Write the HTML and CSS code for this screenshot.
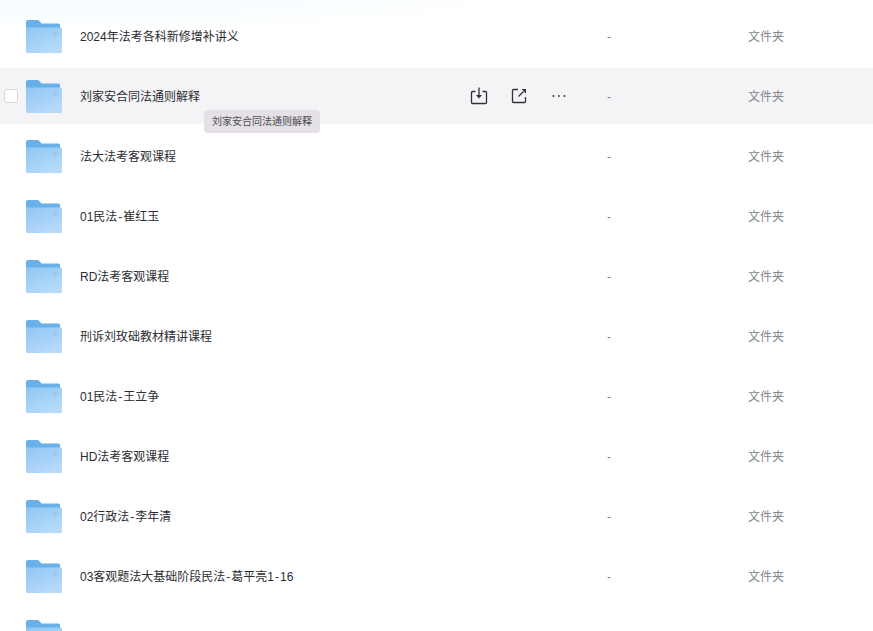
FILE: index.html
```html
<!DOCTYPE html>
<html lang="zh-CN">
<head>
<meta charset="utf-8">
<title>文件列表</title>
<link rel="stylesheet" href="styles.css">
</head>
<body>
<svg class="defs" width="0" height="0" aria-hidden="true">
  <defs>
    <linearGradient id="fg" x1="0" y1="0" x2="0.6" y2="1">
      <stop offset="0" stop-color="#90c6f3"/>
      <stop offset="1" stop-color="#b6dafa"/>
    </linearGradient>
    <symbol id="folder" viewBox="0 0 36 33">
      <path d="M0 2a2 2 0 0 1 2-2h9.500a2 2 0 0 1 1.500.7l2.500 2.800h17a1.500 1.500 0 0 1 1.500 1.500v6h-34z" fill="#68b0ea"/>
      <path d="M0 7.500h34.500a1.500 1.500 0 0 1 1.500 1.500v22.500a1.500 1.500 0 0 1-1.500 1.500h-33a1.500 1.500 0 0 1-1.500-1.500z" fill="url(#fg)"/>
      <path d="M27 12.500h5M27 14.500h5" stroke="#8fc2ef" stroke-width="1" fill="none"/>
    </symbol>
  </defs>
</svg>
<main class="list">
  <div class="row"><span class="check-slot"></span><svg class="folder"><use href="#folder"/></svg><span class="name">2024年法考各科新修增补讲义</span><span class="actions"></span><span class="size">-</span><span class="type">文件夹</span></div>
  <div class="row row-hover">
    <span class="check-slot"><span class="check"></span></span>
    <svg class="folder"><use href="#folder"/></svg>
    <span class="name">刘家安合同法通则解释</span>
    <span class="actions">
      <svg class="icon" viewBox="0 0 18 18"><path d="M5.500 4.500h-3a1 1 0 0 0-1 1v10a1 1 0 0 0 1 1h13a1 1 0 0 0 1-1v-10a1 1 0 0 0-1-1h-3" fill="none" stroke="#2f3238" stroke-width="1.300"/><path d="M9 .5v8" stroke="#2f3238" stroke-width="1.300"/><path d="M6 8h6l-3 3.500z" fill="#2f3238"/></svg>
      <svg class="icon" viewBox="0 0 18 18"><path d="M8 2.500h-4.500a1 1 0 0 0-1 1v11a1 1 0 0 0 1 1h11a1 1 0 0 0 1-1v-4.500" fill="none" stroke="#2f3238" stroke-width="1.300"/><path d="M8.500 9.500l5-5" stroke="#2f3238" stroke-width="1.300"/><path d="M11.500 2h4.500v4.500z" fill="#2f3238"/></svg>
      <svg class="icon" viewBox="0 0 18 18"><circle cx="3.500" cy="9" r=".9" fill="#2f3238"/><circle cx="9" cy="9" r=".9" fill="#2f3238"/><circle cx="14.500" cy="9" r=".9" fill="#2f3238"/></svg>
    </span>
    <span class="size">-</span><span class="type">文件夹</span>
    <span class="tooltip">刘家安合同法通则解释</span>
  </div>
  <div class="row"><span class="check-slot"></span><svg class="folder"><use href="#folder"/></svg><span class="name">法大法考客观课程</span><span class="actions"></span><span class="size">-</span><span class="type">文件夹</span></div>
  <div class="row"><span class="check-slot"></span><svg class="folder"><use href="#folder"/></svg><span class="name">01民法<span class="dash">-</span>崔红玉</span><span class="actions"></span><span class="size">-</span><span class="type">文件夹</span></div>
  <div class="row"><span class="check-slot"></span><svg class="folder"><use href="#folder"/></svg><span class="name">RD法考客观课程</span><span class="actions"></span><span class="size">-</span><span class="type">文件夹</span></div>
  <div class="row"><span class="check-slot"></span><svg class="folder"><use href="#folder"/></svg><span class="name">刑诉刘玫础教材精讲课程</span><span class="actions"></span><span class="size">-</span><span class="type">文件夹</span></div>
  <div class="row"><span class="check-slot"></span><svg class="folder"><use href="#folder"/></svg><span class="name">01民法<span class="dash">-</span>王立争</span><span class="actions"></span><span class="size">-</span><span class="type">文件夹</span></div>
  <div class="row"><span class="check-slot"></span><svg class="folder"><use href="#folder"/></svg><span class="name">HD法考客观课程</span><span class="actions"></span><span class="size">-</span><span class="type">文件夹</span></div>
  <div class="row"><span class="check-slot"></span><svg class="folder"><use href="#folder"/></svg><span class="name">02行政法<span class="dash">-</span>李年清</span><span class="actions"></span><span class="size">-</span><span class="type">文件夹</span></div>
  <div class="row"><span class="check-slot"></span><svg class="folder"><use href="#folder"/></svg><span class="name">03客观题法大基础阶段民法<span class="dash">-</span>葛平亮1<span class="dash">-</span>16</span><span class="actions"></span><span class="size">-</span><span class="type">文件夹</span></div>
  <div class="row"><span class="check-slot"></span><svg class="folder"><use href="#folder"/></svg></div>
</main>
</body>
</html>
```

FILE: styles.css
```css
html, body {
  margin: 0;
  height: 100%;
  overflow: hidden;
  background: #fff;
}
body {
  background: radial-gradient(ellipse 520px 30px at 0 0, #f6fcff 0, #f8fdff 55%, #ffffff 100%);
  font-family: "Liberation Sans", "Noto Sans CJK SC", sans-serif;
  font-size: 12px;
  color: #2c2d33;
}
.defs { position: absolute; }
.list {
  display: flex;
  flex-direction: column;
  gap: 4px;
  padding-top: 8px;
}
.row {
  position: relative;
  display: flex;
  align-items: center;
  height: 56px;
  flex: none;
}
.row-hover { background: #f4f4f7; }
.check-slot {
  width: 26px;
  flex: none;
  display: flex;
  padding-left: 4px;
  box-sizing: border-box;
}
.check {
  width: 14px;
  height: 14px;
  box-sizing: border-box;
  background: #fff;
  border: 1px solid #d4d4da;
  border-radius: 3px;
}
.folder {
  width: 36px;
  height: 33px;
  flex: none;
  margin-right: 18px;
}
.name {
  flex: 1 0 0;
  white-space: nowrap;
  padding-bottom: 2px;
}
.dash { margin: 0 1px; }
.actions {
  display: flex;
  gap: 22px;
  flex: none;
  width: 137px;
}
.icon {
  width: 18px;
  height: 18px;
  flex: none;
}
.size {
  width: 141px;
  flex: none;
  color: #84858d;
  padding-top: 1px;
}
.type {
  color: #84858d;
  width: 125px;
  flex: none;
  padding-bottom: 2px;
}
.tooltip {
  position: absolute;
  left: 204px;
  top: 42px;
  height: 23px;
  line-height: 23px;
  padding: 0 8px;
  background: #e4e0e6;
  border-radius: 4px;
  font-size: 10px;
  color: #4a4a52;
  white-space: nowrap;
}
```
